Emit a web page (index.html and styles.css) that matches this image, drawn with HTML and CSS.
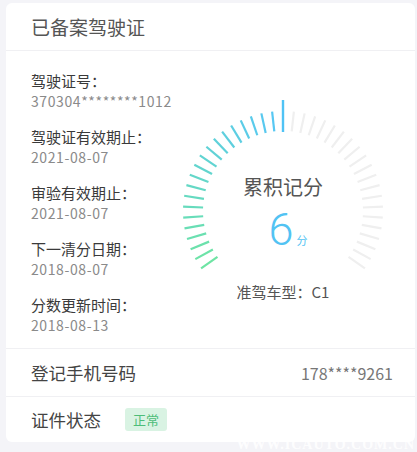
FILE: index.html
```html
<!DOCTYPE html>
<html lang="zh-CN">
<head>
<meta charset="utf-8">
<title>已备案驾驶证</title>
<link rel="stylesheet" href="styles.css">
</head>
<body>
<div class="card">
  <div class="card-header">已备案驾驶证</div>
  <div class="card-body">
    <div class="info">
      <div class="item"><div class="label">驾驶证号：</div><div class="value">370304********1012</div></div>
      <div class="item"><div class="label">驾驶证有效期止：</div><div class="value">2021-08-07</div></div>
      <div class="item"><div class="label">审验有效期止：</div><div class="value">2021-08-07</div></div>
      <div class="item"><div class="label">下一清分日期：</div><div class="value">2018-08-07</div></div>
      <div class="item"><div class="label">分数更新时间：</div><div class="value">2018-08-13</div></div>
    </div>
    <div class="gauge">
      <svg class="gauge-svg" width="224" height="172" viewBox="-112 -112 224 172">
        <defs>
          <line id="t" x1="0" y1="-100" x2="0" y2="-80"/>
        </defs>
        <g stroke-width="2.2">
          <use href="#t" stroke="#6ee4a4" transform="rotate(-125)"/>
          <use href="#t" stroke="#6de3a8" transform="rotate(-118.75)"/>
          <use href="#t" stroke="#6ce1ac" transform="rotate(-112.5)"/>
          <use href="#t" stroke="#6be0b1" transform="rotate(-106.25)"/>
          <use href="#t" stroke="#69deb5" transform="rotate(-100)"/>
          <use href="#t" stroke="#68ddb9" transform="rotate(-93.75)"/>
          <use href="#t" stroke="#67dbbd" transform="rotate(-87.5)"/>
          <use href="#t" stroke="#66dac1" transform="rotate(-81.25)"/>
          <use href="#t" stroke="#65d8c5" transform="rotate(-75)"/>
          <use href="#t" stroke="#64d7c9" transform="rotate(-68.75)"/>
          <use href="#t" stroke="#62d5ce" transform="rotate(-62.5)"/>
          <use href="#t" stroke="#61d4d2" transform="rotate(-56.25)"/>
          <use href="#t" stroke="#60d2d6" transform="rotate(-50)"/>
          <use href="#t" stroke="#5fd1da" transform="rotate(-43.75)"/>
          <use href="#t" stroke="#5ecfde" transform="rotate(-37.5)"/>
          <use href="#t" stroke="#5dcee2" transform="rotate(-31.25)"/>
          <use href="#t" stroke="#5bcce7" transform="rotate(-25)"/>
          <use href="#t" stroke="#5acbeb" transform="rotate(-18.75)"/>
          <use href="#t" stroke="#59c9ef" transform="rotate(-12.5)"/>
          <use href="#t" stroke="#58c8f3" transform="rotate(-6.25)"/>
        </g>
        <line x1="0" y1="-111" x2="0" y2="-79" stroke="#4fc3f5" stroke-width="2.4"/>
        <g stroke="#efefef" stroke-width="2.2">
          <use href="#t" transform="rotate(6.25)"/>
          <use href="#t" transform="rotate(12.5)"/>
          <use href="#t" transform="rotate(18.75)"/>
          <use href="#t" transform="rotate(25)"/>
          <use href="#t" transform="rotate(31.25)"/>
          <use href="#t" transform="rotate(37.5)"/>
          <use href="#t" transform="rotate(43.75)"/>
          <use href="#t" transform="rotate(50)"/>
          <use href="#t" transform="rotate(56.25)"/>
          <use href="#t" transform="rotate(62.5)"/>
          <use href="#t" transform="rotate(68.75)"/>
          <use href="#t" transform="rotate(75)"/>
          <use href="#t" transform="rotate(81.25)"/>
          <use href="#t" transform="rotate(87.5)"/>
          <use href="#t" transform="rotate(93.75)"/>
          <use href="#t" transform="rotate(100)"/>
          <use href="#t" transform="rotate(106.25)"/>
          <use href="#t" transform="rotate(112.5)"/>
          <use href="#t" transform="rotate(118.75)"/>
          <use href="#t" transform="rotate(125)"/>
        </g>
      </svg>
      <div class="gauge-center">
        <div class="gauge-title">累积记分</div>
        <div class="gauge-score"><span class="score-num">6</span><span class="score-unit">分</span></div>
      </div>
      <div class="gauge-type">准驾车型：C1</div>
    </div>
  </div>
  <div class="row">
    <span class="row-label">登记手机号码</span>
    <span class="row-value">178****9261</span>
  </div>
  <div class="row row-status">
    <span class="row-label">证件状态</span>
    <span class="badge">正常</span>
  </div>
</div>
<div class="watermark">WWW.ICAUTO.COM.CN</div>
</body>
</html>
```
FILE: styles.css
```css
html, body {
  margin: 0;
  padding: 0;
}
body {
  background: #f4f4f8;
  font-family: "Noto Sans CJK SC", "Noto Sans", sans-serif;
  width: 417px;
  height: 452px;
  overflow: hidden;
  position: relative;
}
.card {
  margin: 3px 2px 0 6px;
  background: #fff;
  border-radius: 6px;
}
.card-header {
  height: 47px;
  line-height: 47px;
  padding-left: 25px;
  font-size: 19px;
  color: #555;
  border-bottom: 1px solid #f0f0f3;
}
.card-body {
  display: flex;
  border-bottom: 1px solid #f0f0f3;
}
.info {
  width: 140px;
  padding: 19px 0 12px 25px;
  display: flex;
  flex-direction: column;
  gap: 14px;
}
.label {
  font-size: 15px;
  line-height: 21px;
  color: #3a3a3a;
}
.value {
  font-size: 14px;
  line-height: 21px;
  color: #8a8a8a;
  letter-spacing: 0.6px;
}
.gauge {
  position: relative;
  width: 224px;
  margin-top: 48px;
  display: flex;
  flex-direction: column;
  align-items: center;
}
.gauge-svg {
  display: block;
}
.gauge-center {
  position: absolute;
  top: 74px;
  left: 0;
  right: 0;
  display: flex;
  flex-direction: column;
  align-items: center;
}
.gauge-title {
  font-size: 20px;
  line-height: 28px;
  color: #555;
}
.gauge-score {
  display: flex;
  align-items: baseline;
  margin-left: 10px;
  margin-top: 5px;
  color: #52c3f3;
}
.score-num {
  font-family: "Roboto", "Noto Sans", sans-serif;
  font-weight: 300;
  font-size: 45px;
  line-height: 48px;
}
.score-unit {
  font-size: 11px;
  margin-left: 3px;
}
.gauge-type {
  margin-top: 10px;
  font-size: 15px;
  line-height: 21px;
  color: #555;
}
.row {
  height: 47px;
  display: flex;
  align-items: center;
  justify-content: space-between;
  padding: 0 22px 0 25px;
  border-bottom: 1px solid #f0f0f3;
}
.row-label {
  font-size: 17.5px;
  color: #444;
}
.row-value {
  font-size: 16px;
  color: #777;
}
.row-status {
  height: 45px;
  border-bottom: none;
  justify-content: flex-start;
  gap: 24px;
}
.badge {
  background: #d9f3e3;
  color: #4cbd78;
  font-size: 13px;
  line-height: 23px;
  padding: 0 8px;
  border-radius: 3px;
}
.watermark {
  position: absolute;
  right: 2px;
  bottom: 0;
  font-family: "Liberation Serif", serif;
  font-weight: bold;
  font-size: 14px;
  line-height: 14px;
  letter-spacing: 1px;
  color: rgba(255, 255, 255, 0.9);
}
```
